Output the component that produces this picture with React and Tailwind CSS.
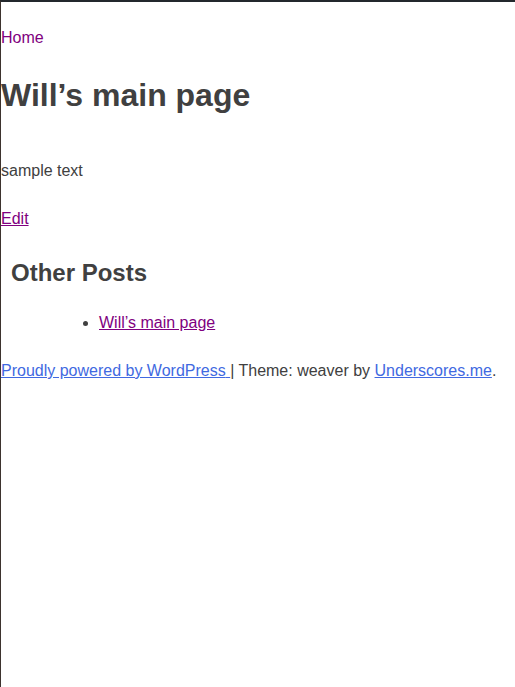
import React from "react";

const App = () => {
    return (
        <div className="min-h-[687px] bg-white border-t-2 border-l border-t-[#23282d] border-l-[#3d332e] font-['Liberation_Sans',Arial,sans-serif] text-[16px] leading-[24px] text-[#404040]">
            <nav className="pt-[24px]">
                <a href="#" className="text-[#800080] no-underline">
                    Home
                </a>
            </nav>

            <main>
                <h1 className="mt-[26px] text-[32px] leading-[38px] font-bold">
                    Will’s main page
                </h1>

                <p className="mt-[45px]">sample text</p>

                <p className="mt-[24px]">
                    <a href="#" className="text-[#800080] underline">
                        Edit
                    </a>
                </p>

                <section className="pl-[10px]">
                    <h2 className="mt-[27px] text-[24px] leading-[29px] font-bold">
                        Other Posts
                    </h2>
                    <ul className="mt-[24px] pl-[88px] list-disc">
                        <li>
                            <a href="#" className="text-[#800080] underline">
                                Will’s main page
                            </a>
                        </li>
                    </ul>
                </section>
            </main>

            <footer className="mt-[24px]">
                <a href="#" className="text-[#4169e1] underline">
                    Proudly powered by WordPress{" "}
                </a>
                <span>| </span>
                Theme: weaver by{" "}
                <a href="#" className="text-[#4169e1] underline">
                    Underscores.me
                </a>
                .
            </footer>
        </div>
    );
};

export default App;
